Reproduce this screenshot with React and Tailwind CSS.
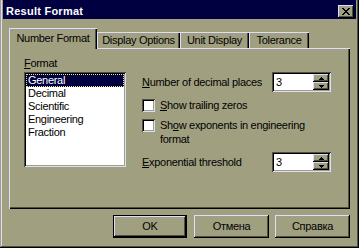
import React from "react";

const raised =
  "shadow-[inset_-1px_-1px_0_#000,inset_1px_1px_0_#dcdcff,inset_-2px_-2px_0_#505040]";
const sunken =
  "shadow-[inset_1px_1px_0_#505040,inset_-1px_-1px_0_#dcdcff,inset_2px_2px_0_#000,inset_-2px_-2px_0_#a0a080]";

function CloseGlyph() {
  const rows = [
    "XX....XX",
    ".XX..XX.",
    "..XXXX..",
    "...XX...",
    "..XXXX..",
    ".XX..XX.",
    "XX....XX",
  ];
  const rects = [];
  rows.forEach((r, y) =>
    r.split("").forEach((c, x) => {
      if (c === "X") rects.push(<rect key={`${x}-${y}`} x={x} y={y} width="1" height="1" fill="#000" />);
    })
  );
  return (
    <svg width="8" height="7" viewBox="0 0 8 7" shapeRendering="crispEdges">
      {rects}
    </svg>
  );
}

function Arrow({ up }) {
  return (
    <svg width="5" height="3" viewBox="0 0 5 3" shapeRendering="crispEdges">
      {up ? (
        <>
          <rect x="2" y="0" width="1" height="1" fill="#000" />
          <rect x="1" y="1" width="3" height="1" fill="#000" />
          <rect x="0" y="2" width="5" height="1" fill="#000" />
        </>
      ) : (
        <>
          <rect x="0" y="0" width="5" height="1" fill="#000" />
          <rect x="1" y="1" width="3" height="1" fill="#000" />
          <rect x="2" y="2" width="1" height="1" fill="#000" />
        </>
      )}
    </svg>
  );
}

function Spin({ value }) {
  return (
    <div className={`w-[59px] h-[20px] bg-white flex p-[2px] ${sunken}`}>
      <div className="flex-1 pl-[2px] leading-[16px] text-black">{value}</div>
      <div className="w-[16px] flex flex-col">
        <div className={`h-[8px] bg-[#a0a080] flex items-center justify-center ${raised}`}>
          <Arrow up />
        </div>
        <div className={`h-[8px] bg-[#a0a080] flex items-center justify-center ${raised}`}>
          <Arrow />
        </div>
      </div>
    </div>
  );
}

function Check() {
  return <div className={`w-[13px] h-[13px] shrink-0 bg-white ${sunken}`} />;
}

export default function App() {
  const items = ["General", "Decimal", "Scientific", "Engineering", "Fraction"];
  return (
    <div className="w-[359px] h-[248px] bg-[#a0a080] px-[3px] text-[11px] leading-[13px] tracking-[-0.3px] text-black font-['Liberation_Sans',Arial,sans-serif] shadow-[inset_-1px_-1px_0_#000,inset_1px_0_0_#a0a080,inset_-2px_-2px_0_#505040,inset_2px_0_0_#dcdcff] overflow-hidden">
      {/* title bar */}
      <div className="h-[19px] bg-[#000040] flex justify-between items-start">
        <div className="ml-[3px] mt-[5px] text-white font-bold tracking-[0.25px]">Result Format</div>
        <div className={`mt-[5px] mr-[2px] w-[16px] h-[13px] bg-[#a0a080] flex items-center justify-center pb-px ${raised}`}>
          <CloseGlyph />
        </div>
      </div>

      {/* tabs */}
      <div className="mt-[9px] mx-[6px] h-[20px] flex items-end">
        <div className="relative z-10 w-[88px] h-[21px] -mb-px bg-[#a0a080] pt-[4px] text-center shadow-[inset_1px_1px_0_#dcdcff,inset_-1px_0_0_#000,inset_-2px_0_0_#505040]">
          Number Format
        </div>
        <div className="w-[83px] h-[16px] flex items-center justify-center shadow-[inset_1px_1px_0_#dcdcff,inset_-1px_0_0_#000,inset_-2px_0_0_#505040]">
          Display Options
        </div>
        <div className="w-[69px] h-[16px] flex items-center justify-center shadow-[inset_1px_1px_0_#dcdcff,inset_-1px_0_0_#000,inset_-2px_0_0_#505040]">
          Unit Display
        </div>
        <div className="w-[60px] h-[16px] flex items-center justify-center shadow-[inset_1px_1px_0_#dcdcff,inset_-1px_0_0_#000,inset_-2px_0_0_#505040]">
          Tolerance
        </div>
      </div>

      {/* panel */}
      <div className="relative mx-[6px] h-[161px] flex pl-[15px] pt-[9px] shadow-[inset_1px_1px_0_#dcdcff,inset_-1px_-1px_0_#000,inset_-2px_-2px_0_#505040]">
        <div className="flex flex-col">
          <div className="h-[13px]">
            <u className="underline-offset-[1px]">F</u>ormat
          </div>
          <div className={`mt-[2px] w-[102px] h-[95px] bg-white p-[2px] ${sunken}`}>
            {items.map((it, i) =>
              i === 0 ? (
                <div
                  key={it}
                  className="h-[13px] bg-[#000040] text-white pl-[2px] outline outline-1 outline-dotted outline-[#e8e890] -outline-offset-1"
                >
                  {it}
                </div>
              ) : (
                <div key={it} className="h-[13px] pl-[2px]">
                  {it}
                </div>
              )
            )}
          </div>
        </div>

        <div className="ml-[16px] pt-[15px] w-[189px] flex flex-col">
          <div className="h-[20px] flex items-center justify-between">
            <span>
              <u className="underline-offset-[1px]">N</u>umber of decimal places
            </span>
            <Spin value="3" />
          </div>
          <div className="mt-[7px] h-[13px] flex items-center">
            <Check />
            <span className="ml-[5px]">
              <u className="underline-offset-[1px]">S</u>how trailing zeros
            </span>
          </div>
          <div className="mt-[6px] flex items-start">
            <div className="mt-px">
              <Check />
            </div>
            <span className="ml-[5px] leading-[14px]">
              Sh<u className="underline-offset-[1px]">o</u>w exponents in engineering
              <br />
              format
            </span>
          </div>
          <div className="mt-[6px] h-[20px] flex items-center justify-between">
            <span>
              <u className="underline-offset-[1px]">E</u>xponential threshold
            </span>
            <Spin value="3" />
          </div>
        </div>
      </div>

      {/* buttons */}
      <div className="mt-[6px] mr-[6px] flex justify-end">
        <div className="w-[74px] h-[23px] border border-black">
          <div className={`w-full h-full flex items-center justify-center ${raised}`}>OK</div>
        </div>
        <div className={`ml-[7px] w-[75px] h-[23px] flex items-center justify-center ${raised}`}>Отмена</div>
        <div className={`ml-[6px] w-[75px] h-[23px] flex items-center justify-center ${raised}`}>Справка</div>
      </div>
    </div>
  );
}
